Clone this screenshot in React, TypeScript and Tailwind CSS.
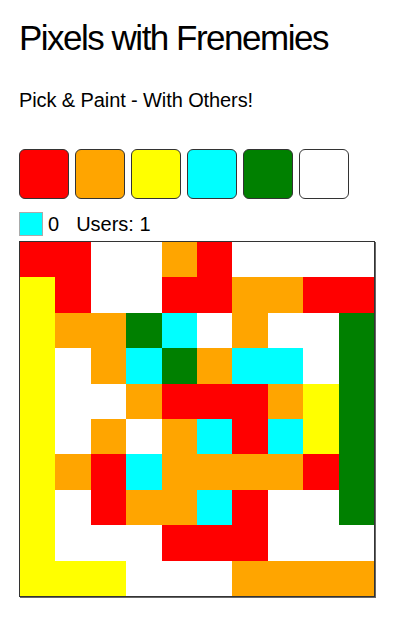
import { useState } from 'react'

const colors: Record<string, string> = {
  R: '#ff0000',
  O: '#ffa500',
  Y: '#ffff00',
  C: '#00ffff',
  G: '#008000',
  W: '#ffffff',
}

const palette = ['R', 'O', 'Y', 'C', 'G', 'W']

// canvas state, one string per row
const rows = [
  'RRWWORWWWW',
  'YRWWRROORR',
  'YOOGCWOWWG',
  'YWOCGOCCWG',
  'YWWORRROYG',
  'YWOWOCRCYG',
  'YORCOOOORG',
  'YWROOCRWWG',
  'YWWWRRRWWW',
  'YYYWWWOOOO',
]

export default function App() {
  const [current, setCurrent] = useState('C')
  const [pixels, setPixels] = useState(rows.map((r) => r.split('')))

  const paint = (y: number, x: number) => {
    setPixels((prev) => prev.map((row, i) => row.map((c, j) => (i === y && j === x ? current : c))))
  }

  return (
    <div className="min-h-screen bg-white text-black pl-[19px] pt-[16px]" style={{ fontFamily: '"Liberation Sans", Arial, sans-serif' }}>
      <h1 className="text-[35px] leading-[44px] font-normal tracking-[-1.5px]">Pixels with Frenemies</h1>
      <p className="mt-[28px] text-[20px] leading-[24px] tracking-[-0.1px]">Pick &amp; Paint - With Others!</p>

      {/* palette */}
      <div className="mt-[37px] flex gap-[6px]">
        {palette.map((p) => (
          <button
            key={p}
            onClick={() => setCurrent(p)}
            className="w-[50px] h-[50px] rounded-[6px] border border-[#333]"
            style={{ backgroundColor: colors[p] }}
          />
        ))}
      </div>

      {/* status */}
      <div className="mt-[13px] flex items-center h-[24px] text-[20px] leading-[24px]">
        <span className="w-[24px] h-[24px] border border-[#aaa]" style={{ backgroundColor: colors[current] }} />
        <span className="ml-[5px]">0</span>
        <span className="ml-[17px]">Users: 1</span>
      </div>

      {/* canvas */}
      <div className="mt-[5px] w-[356px] border border-[#333] shadow-[1px_1px_0_#666] grid grid-cols-10">
        {pixels.map((row, y) =>
          row.map((c, x) => (
            <div
              key={`${y}-${x}`}
              onClick={() => paint(y, x)}
              className="h-[35.4px]"
              style={{ backgroundColor: colors[c] }}
            />
          ))
        )}
      </div>
    </div>
  )
}
